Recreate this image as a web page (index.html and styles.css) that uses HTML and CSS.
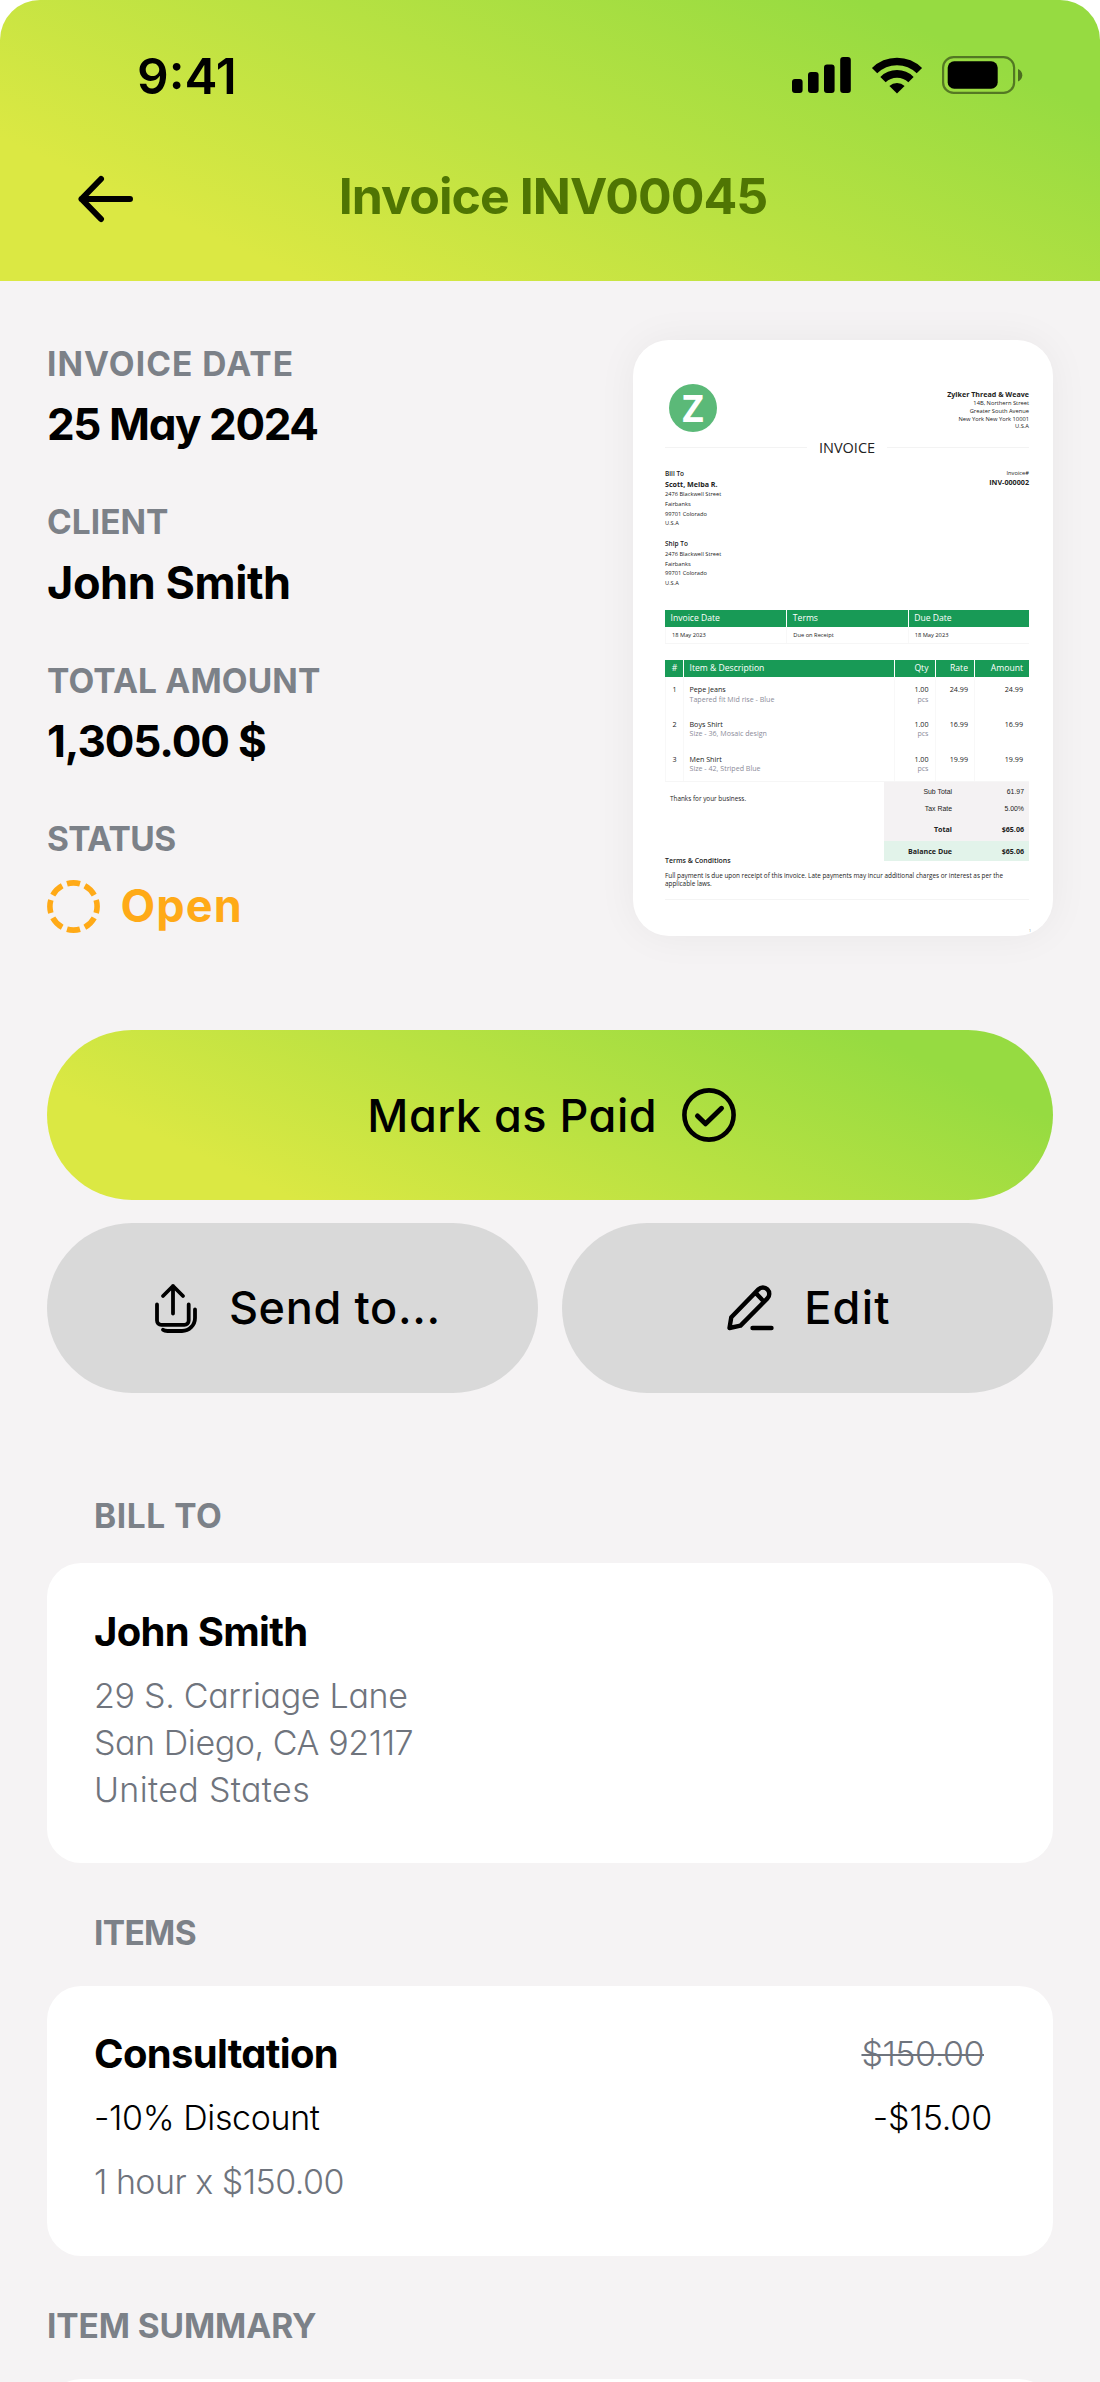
FILE: index.html
```html
<!DOCTYPE html>
<html lang="en">
<head>
<meta charset="utf-8">
<title>Invoice INV00045</title>
<link rel="stylesheet" href="styles.css">
</head>
<body>
<div class="screen">
  <header class="header">
    <div class="statusbar">
      <span class="time">9:41</span>
      <div class="indicators">
        <svg class="signal" width="60" height="38" viewBox="0 0 60 38"><rect x="0" y="23" width="10.6" height="14" rx="3"/><rect x="16" y="16" width="10.6" height="21" rx="3"/><rect x="32" y="8.5" width="10.6" height="28.5" rx="3"/><rect x="48.2" y="1" width="10.6" height="36" rx="3"/></svg>
        <svg class="wifi" width="52" height="38" viewBox="0 0 52 38"><g fill="none" stroke="#000" stroke-width="7.6"><path d="M3.6 14.6a32 32 0 0 1 44.8 0"/><path d="M12 23.6a20 20 0 0 1 28 0"/></g><path d="M26 37.6l-7.6-7.7a11.2 11.2 0 0 1 15.2 0z"/></svg>
        <svg class="battery" width="81" height="38" viewBox="0 0 81 38"><rect x="1.1" y="1.1" width="71" height="35.8" rx="10.5" fill="none" stroke="#000" stroke-opacity=".45" stroke-width="2.2"/><rect x="5.7" y="5.3" width="50" height="27.4" rx="6.5"/><path d="M76 13v12.4c2.600-1.100 4.300-3.500 4.300-6.200S78.600 14.100 76 13z" fill-opacity=".5"/></svg>
      </div>
    </div>
    <div class="navbar">
      <svg class="back" width="56" height="48" viewBox="0 0 56 48" fill="none" stroke="#000" stroke-width="6" stroke-linecap="round" stroke-linejoin="round"><path d="M52 24H3.500M23 4L3.500 24 23 44"/></svg>
      <h1 class="title">Invoice INV00045</h1>
    </div>
  </header>

  <section class="summary">
    <dl class="fields">
      <div class="field"><dt class="label t-date">INVOICE DATE</dt><dd class="value v-date">25 May 2024</dd></div>
      <div class="field"><dt class="label">CLIENT</dt><dd class="value">John Smith</dd></div>
      <div class="field"><dt class="label t-total">TOTAL AMOUNT</dt><dd class="value v-total">1,305.00 $</dd></div>
      <div class="field"><dt class="label t-status">STATUS</dt>
        <dd class="value status"><svg width="53" height="53" viewBox="0 0 53 53"><circle cx="26.500" cy="26.500" r="23.600" pathLength="80" fill="none" stroke="#FFAA17" stroke-width="5.600" stroke-dasharray="7.200 2.800" stroke-dashoffset="3.600"/></svg><span>Open</span></dd></div>
    </dl>

    <article class="sheet">
      <div class="sheet-head">
        <div class="logo">Z</div>
        <div class="company"><b>Zylker Thread &amp; Weave</b><span>14B, Northern Street</span><span>Greater South Avenue</span><span>New York New York 10001</span><span>U.S.A</span></div>
      </div>
      <div class="sheet-title">INVOICE</div>
      <div class="parties">
        <div class="addresses">
          <div class="party"><span class="role">Bill To</span><b>Scott, Melba R.</b><span>2476 Blackwell Street</span><span>Fairbanks</span><span>99701 Colorado</span><span>U.S.A</span></div>
          <div class="party"><span class="role ship">Ship To</span><span>2476 Blackwell Street</span><span>Fairbanks</span><span>99701 Colorado</span><span>U.S.A</span></div>
        </div>
        <div class="number"><span>Invoice#</span><b>INV-000002</b></div>
      </div>
      <div class="dates">
        <div class="th">Invoice Date</div><div class="th">Terms</div><div class="th">Due Date</div>
        <div class="td">18 May 2023</div><div class="td">Due on Receipt</div><div class="td">18 May 2023</div>
      </div>
      <div class="lines">
        <div class="line line-head"><div>#</div><div>Item &amp; Description</div><div>Qty</div><div>Rate</div><div>Amount</div></div>
        <div class="line"><div>1</div><div>Pepe Jeans<small>Tapered fit Mid rise - Blue</small></div><div>1.00<small>pcs</small></div><div>24.99</div><div>24.99</div></div>
        <div class="line"><div>2</div><div>Boys Shirt<small>Size - 36, Mosaic design</small></div><div>1.00<small>pcs</small></div><div>16.99</div><div>16.99</div></div>
        <div class="line"><div>3</div><div>Men Shirt<small>Size - 42, Striped Blue</small></div><div>1.00<small>pcs</small></div><div>19.99</div><div>19.99</div></div>
      </div>
      <div class="sheet-foot">
        <p class="thanks">Thanks for your business.</p>
        <div class="totals">
          <div class="sum plain"><span>Sub Total</span><span>61.97</span></div>
          <div class="sum plain"><span>Tax Rate</span><span>5.00%</span></div>
          <div class="sum total"><span>Total</span><span>$65.06</span></div>
          <div class="sum balance"><span>Balance Due</span><span>$65.06</span></div>
        </div>
      </div>
      <div class="terms">
        <h2>Terms &amp; Conditions</h2>
        <p>Full payment is due upon receipt of this invoice. Late payments may incur additional charges or interest as per the<br>applicable laws.</p>
      </div>
      <div class="page-no">1</div>
    </article>
  </section>

  <div class="actions">
    <button class="btn primary"><span>Mark as Paid</span><svg width="54" height="54" viewBox="0 0 54 54" fill="none" stroke="#000" stroke-linecap="round" stroke-linejoin="round"><circle cx="27" cy="27" r="24.600" stroke-width="4.600"/><path d="M15.500 28l8 7.800 16-15.500" stroke-width="5"/></svg></button>
    <button class="btn send"><svg width="44" height="51" viewBox="0 0 44 51" fill="none" stroke="#000" stroke-width="3.800" stroke-linecap="round" stroke-linejoin="round"><path d="M3 21.500V37.500a4.300 4.300 0 0 0 4.300 4.300H30.400a4.300 4.300 0 0 0 4.300-4.300V21.500M19 30.500V3M9 13L19 3l10 10"/><path d="M41 26.500V35a13 13 0 0 1-13 13H13.500q-3 0-4.500-1.200"/></svg><span>Send to...</span></button>
    <button class="btn edit"><svg width="48" height="48" viewBox="0 0 48 48" fill="none" stroke="#000" stroke-width="4.400" stroke-linecap="round" stroke-linejoin="round"><path d="M3.500 44L5.300 33.200 32.400 5.400a6.300 6.300 0 0 1 9 9L14.500 41.600zM29.500 8.800L37.800 17.500M26.500 44H45.500"/></svg><span>Edit</span></button>
  </div>

  <h2 class="label section t-bill">BILL TO</h2>
  <section class="card bill">
    <h3 class="name">John Smith</h3>
    <p class="text l1">29 S. Carriage Lane</p>
    <p class="text l2">San Diego, CA 92117</p>
    <p class="text l3">United States</p>
  </section>

  <h2 class="label section items-label">ITEMS</h2>
  <section class="card items">
    <div class="row"><h3 class="name">Consultation</h3><s class="text old">$150.00</s></div>
    <div class="row discount"><span class="text">-10% Discount</span><span class="text off">-$15.00</span></div>
    <p class="text qty">1 hour x $150.00</p>
  </section>

  <h2 class="label summary-label">ITEM SUMMARY</h2>
  <section class="card next"></section>
</div>
</body>
</html>
```
FILE: styles.css
```css
* { box-sizing: border-box; margin: 0; padding: 0; }
body { background: #fff; font-family: Inter, "Liberation Sans", sans-serif; font-feature-settings: "cv11"; color: #000; }
svg { display: block; flex: none; }

.screen { width: 1100px; height: 2382px; overflow: hidden; background: #F5F3F4; border-radius: 40px 40px 0 0; }

/* Header */
.header { height: 281px; padding-top: 46px; background: linear-gradient(25deg, #DBE843 18%, #96DB41 86%); }
.statusbar { height: 60px; padding: 0 77px 0 137px; display: flex; justify-content: space-between; align-items: center; }
.time { font-size: 49.5px; font-weight: 600; line-height: 60px; }
.indicators { display: flex; align-items: center; padding-bottom: 2px; }
.wifi { margin: 0 19.5px 0 18.5px; }
.navbar { height: 175px; padding: 5px 0 0 78px; display: grid; grid-template-columns: 56px 1fr 134px; align-items: center; }
.back { margin-top: 6px; }
.title { padding-left: 6px; text-align: center; color: #4F7503; font-size: 50px; font-weight: 700; letter-spacing: -.94px; line-height: 60px; }

/* Summary */
.summary { height: 748.5px; padding: 52px 47px 0; display: flex; justify-content: space-between; align-items: flex-start; }
.fields { padding-top: 1px; }
.field { height: 158.3px; }
.label { color: #7C8188; font-size: 33.5px; font-weight: 700; line-height: 60px; white-space: nowrap; }
.value { font-size: 45px; font-weight: 700; line-height: 61px; letter-spacing: -.42px; }
.t-date { letter-spacing: 1.06px; }
.t-total { letter-spacing: .15px; }
.t-status { letter-spacing: -.6px; }
.t-bill { letter-spacing: .55px; }
.v-date { font-size: 44px; letter-spacing: -1.4px; }
.v-total { font-size: 44px; letter-spacing: -1.1px; }
.status { height: 76px; display: flex; align-items: center; gap: 20.6px; color: #FFAA17; letter-spacing: 1.08px; }
.status span { margin-top: -3px; }

/* Invoice preview */
.sheet { width: 420px; height: 596px; margin-top: 7px; padding: 44px 24px 0 32px; background: #fff; border-radius: 36px; box-shadow: 0 0 40px rgba(0,0,0,.05); font-family: "Open Sans", "Noto Sans", sans-serif; color: #222; }
.sheet-head { height: 55.5px; display: flex; justify-content: space-between; }
.logo { width: 48px; height: 48px; margin-left: 4px; border-radius: 50%; background: #5BB978; color: #fff; font-size: 37px; font-weight: 700; line-height: 48px; text-align: center; }
.company { padding-top: 6.2px; display: flex; flex-direction: column; text-align: right; font-size: 5.76px; line-height: 7.6px; }
.company b { font-size: 7.13px; line-height: 8px; margin-bottom: 2.3px; }
.sheet-title { height: 15px; display: flex; align-items: center; gap: 12px; font-size: 14.5px; line-height: 15px; }
.sheet-title::before, .sheet-title::after { content: ""; flex: 1; height: 1px; background: #F3F3F3; }
.parties { height: 155.8px; padding-top: 14.3px; display: flex; justify-content: space-between; }
.party { display: flex; flex-direction: column; margin-bottom: 10.5px; font-size: 5.68px; line-height: 9.6px; }
.party .role { font-size: 6.5px; line-height: 10px; font-weight: 600; padding-top: .6px; }
.party .ship { padding: 0 0 1px; }
.party b { font-size: 7.14px; line-height: 11px; }
.number { display: flex; flex-direction: column; text-align: right; font-size: 5.73px; line-height: 9px; }
.number b { font-size: 7.18px; line-height: 9.5px; }
.dates { display: grid; grid-template-columns: repeat(3, 1fr); margin-bottom: 16px; border-bottom: 1px solid #F6F6F6; }
.th { padding-left: 5.5px; background: #189A56; color: #fff; font-size: 8.6px; line-height: 16.7px; }
.th + .th { border-left: 1px solid #fff; }
.td { padding-left: 6px; font-size: 5.72px; line-height: 16.3px; border-left: 1px solid #F8F8F8; }
.line { display: grid; grid-template-columns: 18px 211px 40.5px 39.5px 55px; height: 34.6px; font-size: 7.15px; line-height: 9.4px; }
.line > div { padding: 8.2px 6px 0 0; text-align: right; border-left: 1px solid #F8F8F8; }
.line > div:first-child { padding-right: 0; text-align: center; }
.line > div:nth-child(2) { padding-left: 5.5px; text-align: left; }
.line small { display: block; font-size: 7.1px; color: #8C8C9A; }
.line-head { height: 17px; font-size: 8.6px; line-height: 17px; color: #fff; background: #189A56; }
.line-head > div { padding-top: 0; border-color: #fff; }
.line-head > div:first-child { border-color: #189A56; }
.sheet-foot { display: flex; justify-content: space-between; border-top: 1px solid #F6F6F6; }
.thanks { padding: 12px 0 0 5px; font-size: 6.38px; line-height: 9px; }
.totals { width: 145px; padding-top: 2.4px; background: #F4F2F3; font-size: 7.1px; }
.sum { display: grid; grid-template-columns: 68px 1fr; padding-right: 5px; text-align: right; line-height: 16.8px; }
.plain { font-family: "Liberation Sans", Arial, sans-serif; font-size: 6.9px; }
.total { line-height: 22.5px; font-weight: 700; }
.balance { line-height: 20.8px; background: #E2F3EA; font-weight: 700; }
.terms { margin-top: -5px; padding-bottom: 11px; border-bottom: 1px solid #F4F4F4; font-size: 6.38px; line-height: 8.2px; white-space: nowrap; }
.terms h2 { margin-bottom: 6.6px; font-size: 6.95px; line-height: 9px; font-weight: 600; }
.page-no { padding-top: 28px; margin-right: -2px; text-align: right; font-size: 3.5px; line-height: 5px; color: #777; }

/* Actions */
.actions { padding: 0 47px; display: grid; grid-template-columns: 1fr 1fr; gap: 23.5px 24px; }
.btn { height: 170px; border: 0; border-radius: 85px; background: #D9D9D9; color: #000; font: 500 45px/60px Inter, "Liberation Sans", sans-serif; font-feature-settings: "cv11"; letter-spacing: .65px; display: flex; align-items: center; justify-content: center; }
.primary { grid-column: 1 / -1; gap: 24.6px; padding-left: 3px; letter-spacing: .5px; background: linear-gradient(25deg, #DBE843 18%, #96DB41 86%); }
.primary span { margin-top: 3px; }
.send, .edit { gap: 30.7px; }
.send { padding-left: 10px; }
.edit { padding-left: 1.4px; letter-spacing: 1.25px; }

/* Sections */
.card { margin: 0 47px; padding: 44.5px 61px 0 47px; background: #fff; border-radius: 34px; }
.section { padding-left: 94px; margin: 93px 0 17px; }
.name { font-size: 40px; font-weight: 700; line-height: 48px; letter-spacing: -.68px; }
.text { font-size: 34px; font-weight: 300; line-height: 47px; letter-spacing: -.38px; }
.bill { height: 299.5px; }
.bill .text { color: #6F747D; }
.bill .name { margin-bottom: 16.3px; }
.bill .l1 { letter-spacing: -.3px; }
.bill .l2 { letter-spacing: -.42px; }
.bill .l3 { letter-spacing: .35px; }
.items-label { margin: 40px 0 23px; letter-spacing: -.67px; }
.items { height: 270.5px; }
.row { display: flex; justify-content: space-between; }
.discount { margin: 16.3px 0 17.2px; }
.items .old { margin-right: 8px; color: #6F747D; letter-spacing: -.48px; text-decoration-thickness: 2px; }
.items .off { letter-spacing: -.16px; }
.items .qty { color: #6F747D; letter-spacing: -.53px; }
.summary-label { padding-left: 47px; margin: 39.7px 0 23px; letter-spacing: -.1px; }
.next { height: 300px; }
```
